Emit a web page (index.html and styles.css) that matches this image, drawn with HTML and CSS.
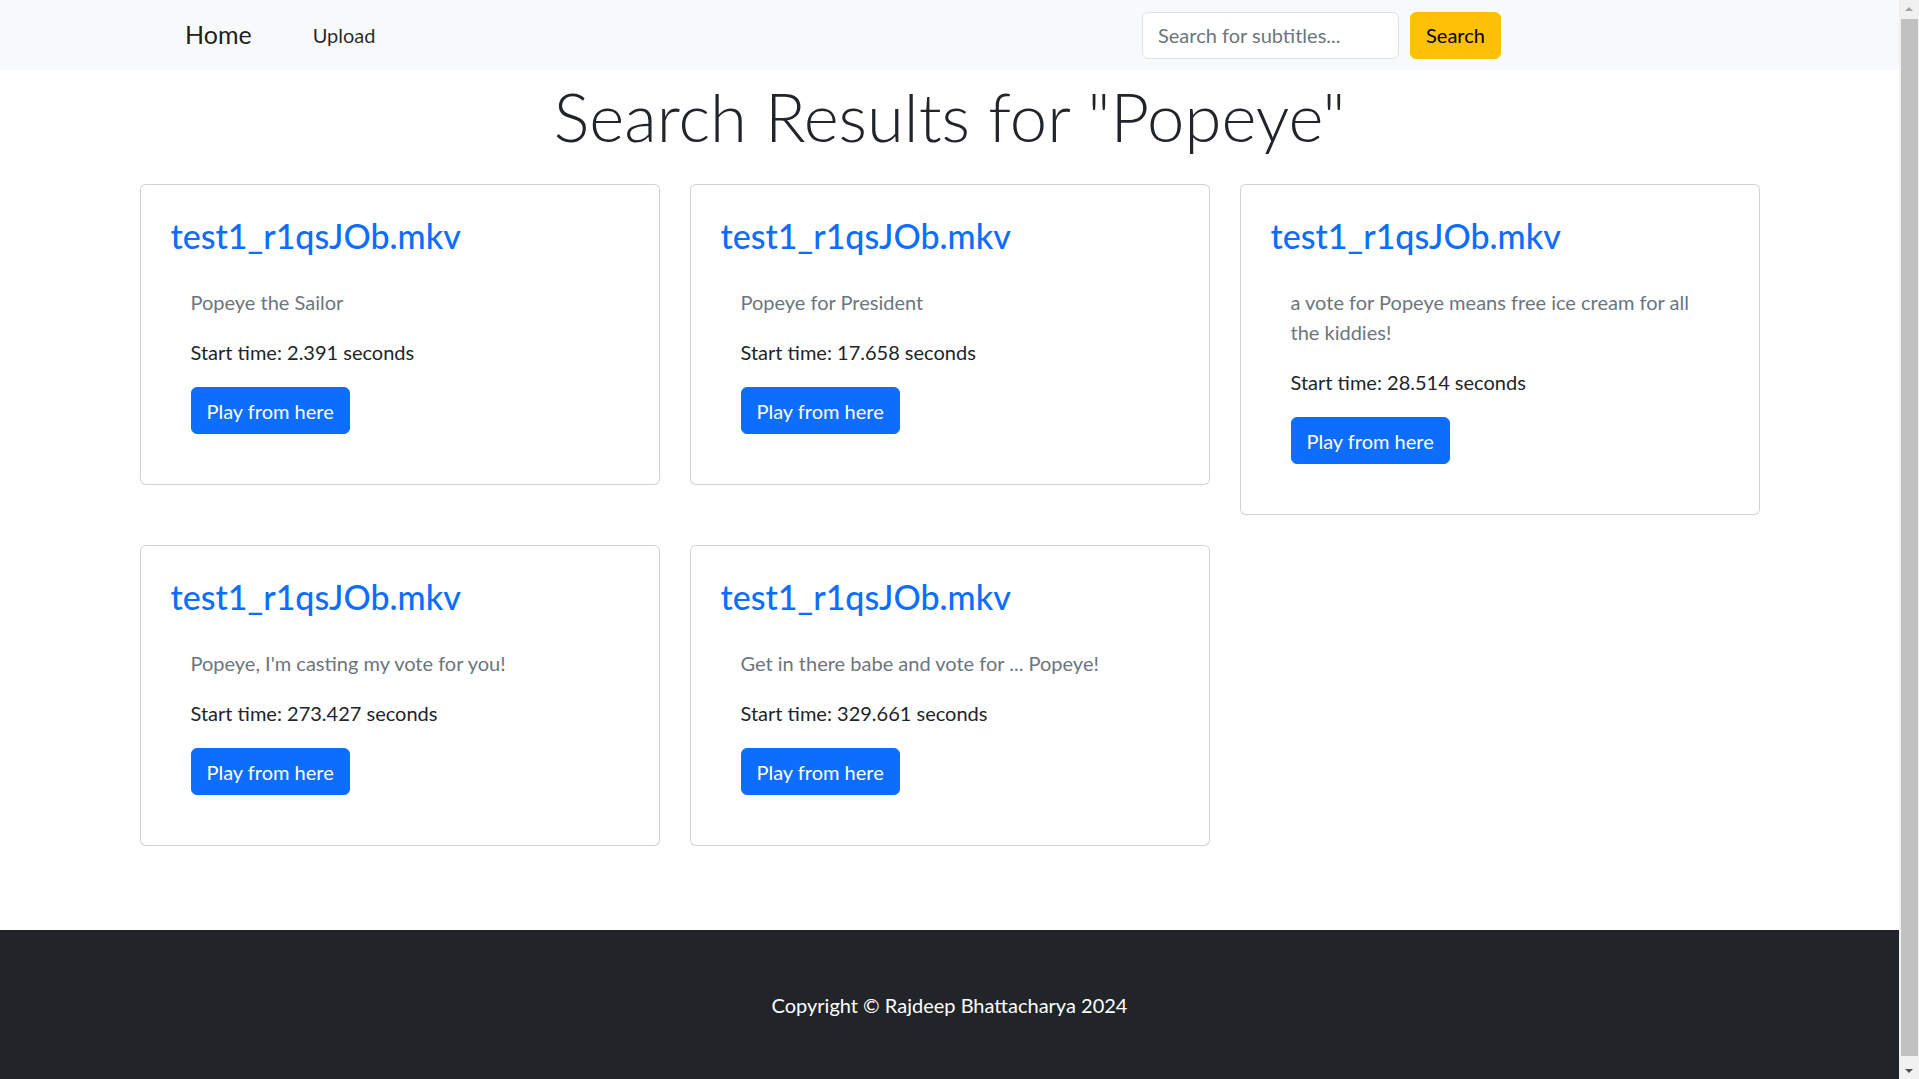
FILE: index.html
```html
<!DOCTYPE html>
<html lang="en">
<head>
<meta charset="utf-8">
<title>Search Results</title>
<link rel="stylesheet" href="styles.css">
</head>
<body>
<div class="page">
  <nav class="navbar">
    <a class="brand" href="#">Home</a>
    <a class="nav-link" href="#">Upload</a>
    <form class="search">
      <input class="search-input" type="text" placeholder="Search for subtitles...">
      <button class="btn-search" type="button">Search</button>
    </form>
  </nav>
  <main class="content">
    <h1 class="page-title">Search Results for "Popeye"</h1>
    <div class="results">
      <div class="card">
        <h3 class="card-title"><a href="#">test1_r1qsJOb.mkv</a></h3>
        <div class="match">
          <p class="snippet">Popeye the Sailor</p>
          <p class="time">Start time: 2.391 seconds</p>
          <a class="btn-play" href="#">Play from here</a>
        </div>
      </div>
      <div class="card">
        <h3 class="card-title"><a href="#">test1_r1qsJOb.mkv</a></h3>
        <div class="match">
          <p class="snippet">Popeye for President</p>
          <p class="time">Start time: 17.658 seconds</p>
          <a class="btn-play" href="#">Play from here</a>
        </div>
      </div>
      <div class="card">
        <h3 class="card-title"><a href="#">test1_r1qsJOb.mkv</a></h3>
        <div class="match">
          <p class="snippet">a vote for Popeye means free ice cream for all the kiddies!</p>
          <p class="time">Start time: 28.514 seconds</p>
          <a class="btn-play" href="#">Play from here</a>
        </div>
      </div>
      <div class="card">
        <h3 class="card-title"><a href="#">test1_r1qsJOb.mkv</a></h3>
        <div class="match">
          <p class="snippet">Popeye, I'm casting my vote for you!</p>
          <p class="time">Start time: 273.427 seconds</p>
          <a class="btn-play" href="#">Play from here</a>
        </div>
      </div>
      <div class="card">
        <h3 class="card-title"><a href="#">test1_r1qsJOb.mkv</a></h3>
        <div class="match">
          <p class="snippet">Get in there babe and vote for ... Popeye!</p>
          <p class="time">Start time: 329.661 seconds</p>
          <a class="btn-play" href="#">Play from here</a>
        </div>
      </div>
    </div>
  </main>
  <footer class="footer">Copyright © Rajdeep Bhattacharya 2024</footer>
</div>
<div class="scrollbar">
  <div class="sb-btn sb-up"></div>
  <div class="sb-thumb"></div>
  <div class="sb-btn sb-down"></div>
</div>
</body>
</html>
```

FILE: styles.css
```css
* { box-sizing: border-box; }

html, body {
  margin: 0;
  padding: 0;
}

body {
  font-family: "Lato", "Open Sans", sans-serif;
  font-size: 20px;
  line-height: 1.5;
  color: #212529;
  background: #fff;
  display: flex;
  height: 1079px;
  overflow: hidden;
}

.page {
  flex: 1;
  min-width: 0;
  display: flex;
  flex-direction: column;
}

/* Navbar */
.navbar {
  background: #f8f9fa;
  height: 70px;
  display: flex;
  align-items: center;
  padding: 0 398px 0 185px;
}

.brand {
  font-size: 25px;
  line-height: 1.5;
  color: rgba(0, 0, 0, 0.9);
  text-decoration: none;
}

.nav-link {
  margin-left: 61px;
  font-size: 20px;
  color: rgba(0, 0, 0, 0.85);
  text-decoration: none;
}

.search {
  margin: 0 0 0 auto;
  display: flex;
  gap: 11px;
}

.search-input {
  width: 257px;
  height: 47px;
  padding: 0 15px;
  font-family: inherit;
  font-size: 20px;
  color: #212529;
  background: #fff;
  border: 1px solid #dee2e6;
  border-radius: 6px;
  outline: none;
}

.search-input::placeholder {
  color: #6c757d;
}

.btn-search {
  width: 91px;
  height: 47px;
  padding: 0;
  font-family: inherit;
  font-size: 20px;
  color: #000;
  background: #ffc107;
  border: 1px solid #ffc107;
  border-radius: 6px;
}

/* Content */
.content {
  padding-bottom: 84px;
}

.page-title {
  margin: 0 0 26px;
  padding-top: 4px;
  font-size: 67px;
  font-weight: 300;
  line-height: 84px;
  text-align: center;
  color: #212529;
}

.results {
  display: grid;
  grid-template-columns: repeat(3, 520px);
  column-gap: 30px;
  row-gap: 30px;
  justify-content: center;
  align-items: start;
}

.card {
  border: 1px solid rgba(0, 0, 0, 0.175);
  border-radius: 6px;
  padding: 30px;
  background: #fff;
}

.card-title {
  margin: 0 0 10px;
  font-size: 34px;
  font-weight: 500;
  line-height: 42px;
}

.card-title a {
  color: #0d6efd;
  text-decoration: none;
}

.match {
  padding: 20px;
}

.snippet {
  margin: 0 0 20px;
  color: #6c757d;
}

.time {
  margin: 0 0 20px;
}

.btn-play {
  display: inline-block;
  height: 47px;
  padding: 7.5px 15px;
  line-height: 30px;
  font-size: 20px;
  color: #fff;
  background: #0d6efd;
  border: 1px solid #0d6efd;
  border-radius: 6px;
  text-decoration: none;
  vertical-align: top;
}

/* Footer */
.footer {
  background: #212529;
  color: #fff;
  text-align: center;
  padding: 60px 0 59px;
  line-height: 30px;
}

/* Scrollbar column */
.scrollbar {
  width: 20px;
  height: 1079px;
  background: #f1f1f1;
  display: flex;
  flex-direction: column;
}

.sb-btn {
  height: 17px;
  display: flex;
  align-items: center;
  justify-content: center;
}

.sb-up {
  margin-bottom: 2px;
}

.sb-down {
  margin-top: 6px;
}

.sb-up::before {
  content: "";
  border-left: 4px solid transparent;
  border-right: 4px solid transparent;
  border-bottom: 4px solid #a3a3a3;
}

.sb-down::before {
  content: "";
  border-left: 4px solid transparent;
  border-right: 4px solid transparent;
  border-top: 4px solid #505050;
}

.sb-thumb {
  flex: 1;
  margin: 0 1px 0 2px;
  background: #c1c1c1;
}
```
